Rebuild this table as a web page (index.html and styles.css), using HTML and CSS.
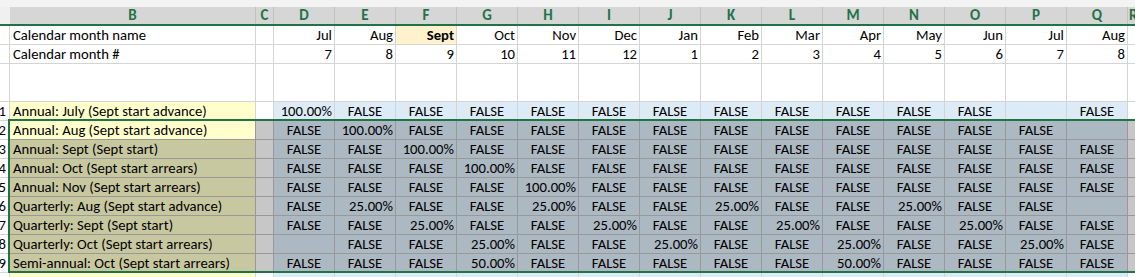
FILE: index.html
```html
<!DOCTYPE html>
<html>
<head>
<meta charset="utf-8">
<link rel="stylesheet" href="styles.css">
</head>
<body>
<div class="sheet">
  <div class="strip"></div>
  <div class="row hdr">
    <div class="h hA"></div><div class="h">B</div><div class="h">C</div>
    <div class="h">D</div><div class="h">E</div><div class="h">F</div><div class="h">G</div><div class="h">H</div><div class="h">I</div><div class="h">J</div><div class="h">K</div><div class="h">L</div><div class="h">M</div><div class="h">N</div><div class="h">O</div><div class="h">P</div><div class="h">Q</div><div class="h hR">R</div>
  </div>
  <div class="row">
    <div class="c a"></div><div class="c l">Calendar month name</div><div class="c"></div>
    <div class="c r">Jul</div><div class="c r">Aug</div><div class="c r sept">Sept</div><div class="c r">Oct</div><div class="c r">Nov</div><div class="c r">Dec</div><div class="c r">Jan</div><div class="c r">Feb</div><div class="c r">Mar</div><div class="c r">Apr</div><div class="c r">May</div><div class="c r">Jun</div><div class="c r">Jul</div><div class="c r">Aug</div><div class="c"></div>
  </div>
  <div class="row">
    <div class="c a"></div><div class="c l">Calendar month #</div><div class="c"></div>
    <div class="c r">7</div><div class="c r">8</div><div class="c r">9</div><div class="c r">10</div><div class="c r">11</div><div class="c r">12</div><div class="c r">1</div><div class="c r">2</div><div class="c r">3</div><div class="c r">4</div><div class="c r">5</div><div class="c r">6</div><div class="c r">7</div><div class="c r">8</div><div class="c"></div>
  </div>
  <div class="row tall">
    <div class="c a"></div><div class="c"></div><div class="c"></div>
    <div class="c"></div><div class="c"></div><div class="c"></div><div class="c"></div><div class="c"></div><div class="c"></div><div class="c"></div><div class="c"></div><div class="c"></div><div class="c"></div><div class="c"></div><div class="c"></div><div class="c"></div><div class="c"></div><div class="c"></div>
  </div>
  <div class="row">
    <div class="c a r">1</div><div class="c l y">Annual: July (Sept start advance)</div><div class="c"></div>
    <div class="c r d">100.00%</div><div class="c t d">FALSE</div><div class="c t d">FALSE</div><div class="c t d">FALSE</div><div class="c t d">FALSE</div><div class="c t d">FALSE</div><div class="c t d">FALSE</div><div class="c t d">FALSE</div><div class="c t d">FALSE</div><div class="c t d">FALSE</div><div class="c t d">FALSE</div><div class="c t d">FALSE</div><div class="c d"></div><div class="c t d">FALSE</div><div class="c"></div>
  </div>
  <div class="row sel">
    <div class="c a r">2</div><div class="c l y act">Annual: Aug (Sept start advance)</div><div class="c"></div>
    <div class="c t d">FALSE</div><div class="c r d">100.00%</div><div class="c t d">FALSE</div><div class="c t d">FALSE</div><div class="c t d">FALSE</div><div class="c t d">FALSE</div><div class="c t d">FALSE</div><div class="c t d">FALSE</div><div class="c t d">FALSE</div><div class="c t d">FALSE</div><div class="c t d">FALSE</div><div class="c t d">FALSE</div><div class="c t d">FALSE</div><div class="c d"></div><div class="c"></div>
  </div>
  <div class="row sel">
    <div class="c a r">3</div><div class="c l y">Annual: Sept (Sept start)</div><div class="c"></div>
    <div class="c t d">FALSE</div><div class="c t d">FALSE</div><div class="c r d">100.00%</div><div class="c t d">FALSE</div><div class="c t d">FALSE</div><div class="c t d">FALSE</div><div class="c t d">FALSE</div><div class="c t d">FALSE</div><div class="c t d">FALSE</div><div class="c t d">FALSE</div><div class="c t d">FALSE</div><div class="c t d">FALSE</div><div class="c t d">FALSE</div><div class="c t d">FALSE</div><div class="c"></div>
  </div>
  <div class="row sel">
    <div class="c a r">4</div><div class="c l y">Annual: Oct (Sept start arrears)</div><div class="c"></div>
    <div class="c t d">FALSE</div><div class="c t d">FALSE</div><div class="c t d">FALSE</div><div class="c r d">100.00%</div><div class="c t d">FALSE</div><div class="c t d">FALSE</div><div class="c t d">FALSE</div><div class="c t d">FALSE</div><div class="c t d">FALSE</div><div class="c t d">FALSE</div><div class="c t d">FALSE</div><div class="c t d">FALSE</div><div class="c t d">FALSE</div><div class="c t d">FALSE</div><div class="c"></div>
  </div>
  <div class="row sel">
    <div class="c a r">5</div><div class="c l y">Annual: Nov (Sept start arrears)</div><div class="c"></div>
    <div class="c t d">FALSE</div><div class="c t d">FALSE</div><div class="c t d">FALSE</div><div class="c t d">FALSE</div><div class="c r d">100.00%</div><div class="c t d">FALSE</div><div class="c t d">FALSE</div><div class="c t d">FALSE</div><div class="c t d">FALSE</div><div class="c t d">FALSE</div><div class="c t d">FALSE</div><div class="c t d">FALSE</div><div class="c t d">FALSE</div><div class="c t d">FALSE</div><div class="c"></div>
  </div>
  <div class="row sel">
    <div class="c a r">6</div><div class="c l y">Quarterly: Aug (Sept start advance)</div><div class="c"></div>
    <div class="c t d">FALSE</div><div class="c r d">25.00%</div><div class="c t d">FALSE</div><div class="c t d">FALSE</div><div class="c r d">25.00%</div><div class="c t d">FALSE</div><div class="c t d">FALSE</div><div class="c r d">25.00%</div><div class="c t d">FALSE</div><div class="c t d">FALSE</div><div class="c r d">25.00%</div><div class="c t d">FALSE</div><div class="c t d">FALSE</div><div class="c d"></div><div class="c"></div>
  </div>
  <div class="row sel">
    <div class="c a r">7</div><div class="c l y">Quarterly: Sept (Sept start)</div><div class="c"></div>
    <div class="c t d">FALSE</div><div class="c t d">FALSE</div><div class="c r d">25.00%</div><div class="c t d">FALSE</div><div class="c t d">FALSE</div><div class="c r d">25.00%</div><div class="c t d">FALSE</div><div class="c t d">FALSE</div><div class="c r d">25.00%</div><div class="c t d">FALSE</div><div class="c t d">FALSE</div><div class="c r d">25.00%</div><div class="c t d">FALSE</div><div class="c t d">FALSE</div><div class="c"></div>
  </div>
  <div class="row sel">
    <div class="c a r">8</div><div class="c l y">Quarterly: Oct (Sept start arrears)</div><div class="c"></div>
    <div class="c d"></div><div class="c t d">FALSE</div><div class="c t d">FALSE</div><div class="c r d">25.00%</div><div class="c t d">FALSE</div><div class="c t d">FALSE</div><div class="c r d">25.00%</div><div class="c t d">FALSE</div><div class="c t d">FALSE</div><div class="c r d">25.00%</div><div class="c t d">FALSE</div><div class="c t d">FALSE</div><div class="c r d">25.00%</div><div class="c t d">FALSE</div><div class="c"></div>
  </div>
  <div class="row sel">
    <div class="c a r">9</div><div class="c l y">Semi-annual: Oct (Sept start arrears)</div><div class="c"></div>
    <div class="c t d">FALSE</div><div class="c t d">FALSE</div><div class="c t d">FALSE</div><div class="c r d">50.00%</div><div class="c t d">FALSE</div><div class="c t d">FALSE</div><div class="c t d">FALSE</div><div class="c t d">FALSE</div><div class="c t d">FALSE</div><div class="c r d">50.00%</div><div class="c t d">FALSE</div><div class="c t d">FALSE</div><div class="c t d">FALSE</div><div class="c t d">FALSE</div><div class="c"></div>
  </div>
  <div class="row">
    <div class="c a"></div><div class="c y"></div><div class="c"></div>
    <div class="c d"></div><div class="c d"></div><div class="c d"></div><div class="c d"></div><div class="c d"></div><div class="c d"></div><div class="c d"></div><div class="c d"></div><div class="c d"></div><div class="c d"></div><div class="c d"></div><div class="c d"></div><div class="c d"></div><div class="c d"></div><div class="c"></div>
  </div>
  <div class="selbox"></div>
</div>
</body>
</html>
```

FILE: styles.css
```css
* { box-sizing: border-box; }
html, body { margin: 0; padding: 0; background: #fff; }
.sheet {
  position: relative;
  width: 1135px;
  height: 277px;
  overflow: hidden;
  font-family: Carlito, Lato, "Liberation Sans", sans-serif;
  font-size: 14.67px;
  color: #000;
}
.strip { height: 7px; background: #f3f3f3; }
.row {
  display: grid;
  grid-template-columns: 10px 246px 18px repeat(14, 61px) 40px;
  height: 19px;
}
.row.tall { height: 38px; }
.hdr {
  height: 19px;
  border-bottom: 2px solid #217346;
}
.h {
  background: #d6d6d6;
  color: #217346;
  font-weight: bold;
  font-size: 15px;
  display: flex;
  align-items: center;
  justify-content: center;
  border-right: 1px solid #c2c2c2;
  line-height: 17px;
}
.h.hA { background: #f0f0f0; border-right: none; }
.h.hR { justify-content: flex-start; padding-left: 1px; }
.c {
  border-right: 1px solid #d4d4d4;
  border-bottom: 1px solid #d4d4d4;
  overflow: hidden;
  white-space: nowrap;
  display: flex;
  align-items: flex-end;
  padding: 0 2px 0 2px;
  line-height: 17px;
}
.c.l { justify-content: flex-start; padding-left: 3px; }
.c.r { justify-content: flex-end; }
.c.t { justify-content: center; }
.c.a { justify-content: flex-end; padding: 0 3px 0 0; }
.c.y { background: #ffffcc; }
.c.d { background: #ddebf7; }
.c.sept { background: #fff2cc; font-weight: bold; }
.sel .c { background: #c7c7c7; border-color: #999; }
.sel .c.y { background: #c8c8a0; }
.sel .c.d { background: #acb8c2; }
.sel .c.act { background: #ffffcc; }
.sel .c.a { background: #fff; border-color: #d4d4d4; }
.selbox {
  position: absolute;
  left: 8px;
  top: 119px;
  width: 1200px;
  height: 154px;
  border: 2px solid #217346;
  pointer-events: none;
}
```
